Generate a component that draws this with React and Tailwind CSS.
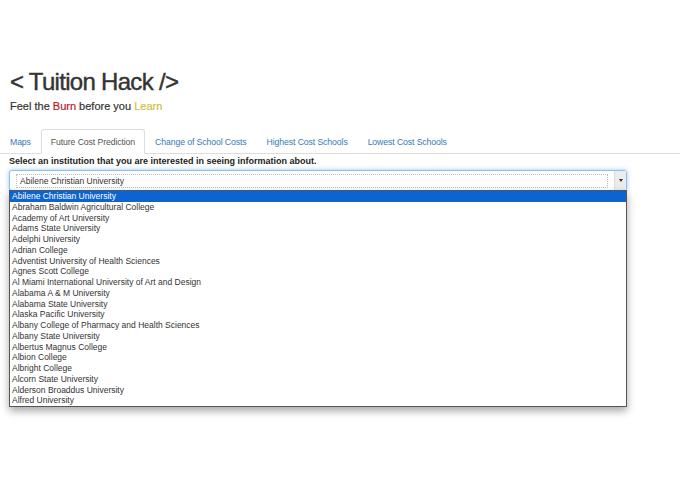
import React from 'react';

const schools = [
  'Abilene Christian University',
  'Abraham Baldwin Agricultural College',
  'Academy of Art University',
  'Adams State University',
  'Adelphi University',
  'Adrian College',
  'Adventist University of Health Sciences',
  'Agnes Scott College',
  'Al Miami International University of Art and Design',
  'Alabama A & M University',
  'Alabama State University',
  'Alaska Pacific University',
  'Albany College of Pharmacy and Health Sciences',
  'Albany State University',
  'Albertus Magnus College',
  'Albion College',
  'Albright College',
  'Alcorn State University',
  'Alderson Broaddus University',
  'Alfred University',
];

const tabs = ['Maps', 'Future Cost Prediction', 'Change of School Costs', 'Highest Cost Schools', 'Lowest Cost Schools'];

const App = () => {
  const active = 'Future Cost Prediction';

  return (
    <div className="w-[695px] h-[494px] bg-white text-[#333] font-['Liberation_Sans',Arial,sans-serif] overflow-hidden">
      <div className="pt-[68px]">
        <h1 className="pl-[10px] text-[24px] leading-[28px] tracking-[-0.7px] text-[#333] [-webkit-text-stroke:0.4px_#333]">
          &lt; Tuition Hack /&gt;
        </h1>
        <p className="pl-[10px] mt-[3px] text-[11px] leading-[14px] text-[#333] [-webkit-text-stroke:0.2px_currentColor]">
          Feel the <span className="text-[#b5202a]">Burn</span> before you{' '}
          <span className="text-[#cfc13a]">Learn</span>
        </p>
      </div>

      {/* tab strip */}
      <div className="mt-[16px] w-[680px] flex border-b border-[#ddd]">
        {tabs.map((t) => (
          <div
            key={t}
            className={`h-[25px] px-[9px] text-[8.7px] leading-[25px] tracking-[-0.1px] -mb-px ${
              t === active
                ? 'border border-[#ddd] border-b-white rounded-t-[3px] bg-white text-[#555]'
                : 'border border-transparent text-[#337ab7]'
            }`}
          >
            {t}
          </div>
        ))}
      </div>

      <div className="pl-[9px] pt-[1px] text-[9px] leading-[13px] font-bold text-[#222]">
        Select an institution that you are interested in seeing information about.
      </div>

      {/* select with open list */}
      <div className="relative ml-[9px] mt-[2px] w-[618px]">
        <div className="h-[21px] flex items-center border border-[#8cc0ee] rounded-[3px] shadow-[0_0_4px_rgba(102,175,233,0.7)] bg-white">
          <div className="ml-[6px] flex-1 h-[14px] border border-dotted border-[#bbb] text-[8.5px] leading-[12px] pl-[3px] text-[#333]">
            Abilene Christian University
          </div>
          <div className="ml-[6px] w-[12px] h-full bg-[#ececec] border-l border-[#ddd] flex items-center justify-center">
            <div className="w-0 h-0 border-l-[2px] border-r-[2px] border-t-[3px] border-l-transparent border-r-transparent border-t-[#333]" />
          </div>
        </div>

        <ul className="absolute left-0 top-[20px] w-[618px] bg-white border border-[#555] shadow-[0_4px_8px_rgba(0,0,0,0.35)]">
          {schools.map((s, i) => (
            <li
              key={s}
              className={`h-[10.75px] pl-[2px] text-[8.5px] leading-[10.75px] whitespace-nowrap ${
                i === 0 ? 'bg-[#0b64d0] text-white' : 'text-[#333]'
              }`}
            >
              {s}
            </li>
          ))}
        </ul>
      </div>
    </div>
  );
};

export default App;
